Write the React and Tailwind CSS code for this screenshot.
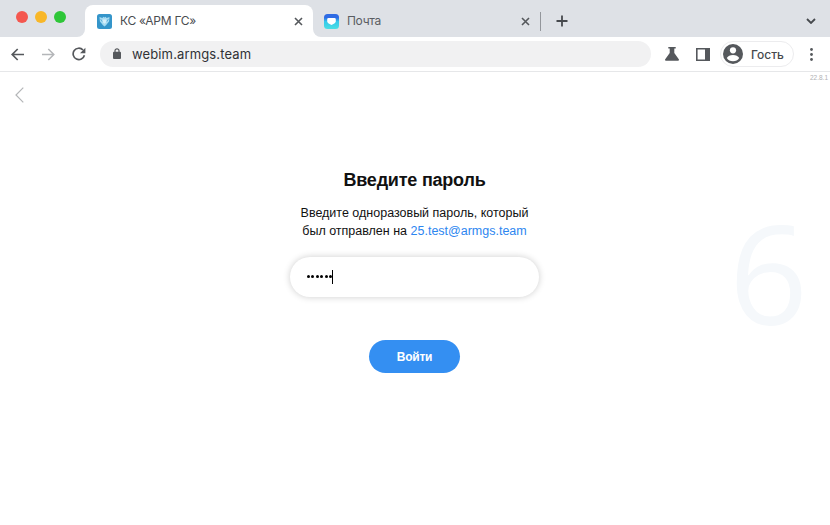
function TabClose() {
  return (
    <svg className="size-[9px] shrink-0" viewBox="0 0 9 9" stroke="#55585c" strokeWidth="1.6">
      <path d="M1 1l7 7M8 1L1 8" />
    </svg>
  );
}

function TabStrip() {
  return (
    <div className="flex h-[37px] items-end bg-[#dee1e6]">
      <div className="flex h-[37px] w-[77px] shrink-0 items-center gap-[7px] pb-[3px] pl-4">
        <span className="size-3 rounded-full bg-[#f4574f]" />
        <span className="size-3 rounded-full bg-[#f8b728]" />
        <span className="size-3 rounded-full bg-[#2ec638]" />
      </div>
      <span className="size-2 shrink-0 bg-white">
        <span className="block size-2 rounded-br-lg bg-[#dee1e6]" />
      </span>
      <div className="flex h-8 w-[228px] shrink-0 items-center rounded-t-lg bg-white pl-3 pr-[10px]">
        <svg className="size-[15px]" viewBox="0 0 15 15">
          <rect width="15" height="15" rx="2.500" fill="#3495ca" />
          <path d="M2.500 3l2.800 1 1.200-1.200 1 .8 1-.8L9.700 4l2.800-1-.4 4.500-1.700 2-1.400 1.700-1.500 1.300L6 11.200 4.600 9.500l-1.700-2z" fill="#a5daf1" />
          <path d="M5.700 5.500h3.600v2.700l-1.800 1.600-1.800-1.600z" fill="#d5effa" />
          <path d="M3.600 5l1.600 2.600M11.400 5L9.800 7.600" stroke="#3495ca" strokeWidth=".6" />
        </svg>
        <span className="ml-2 whitespace-nowrap text-[12px] tracking-[-0.27px] text-[#494c50]">КС «АРМ ГС»</span>
        <span className="ml-auto">
          <TabClose />
        </span>
      </div>
      <span className="size-2 shrink-0 bg-white">
        <span className="block size-2 rounded-bl-lg bg-[#dee1e6]" />
      </span>
      <div className="flex h-8 w-[219px] shrink-0 items-center pl-[3px] pr-[10px]">
        <svg className="size-[15px]" viewBox="0 0 15 15">
          <defs>
            <linearGradient id="mail" x1="0" y1="0" x2="0" y2="1">
              <stop offset="0.25" stopColor="#2f6be4" />
              <stop offset="0.5" stopColor="#35c8ea" />
              <stop offset="1" stopColor="#49dfe4" />
            </linearGradient>
          </defs>
          <rect width="15" height="15" rx="3.500" fill="url(#mail)" />
          <path d="M3.200 5.300Q3.200 4 4.600 4h5.800q1.400 0 1.400 1.300v2.200Q11.800 9 7.500 11 3.200 9 3.200 7.500z" fill="#fff" />
        </svg>
        <span className="ml-2 whitespace-nowrap text-[12px] tracking-[-0.3px] text-[#5a5d62]">Почта</span>
        <span className="ml-auto">
          <TabClose />
        </span>
      </div>
      <span className="mb-[6px] h-[19px] w-px shrink-0 bg-[#93969b]" />
      <svg className="mb-[10px] ml-[15px] size-3" viewBox="0 0 12 12" stroke="#46494d" strokeWidth="1.8">
        <path d="M6 .5v11M.5 6h11" />
      </svg>
      <svg className="mb-[13px] ml-auto mr-[14px] h-[6px] w-[10px]" viewBox="0 0 10 6" fill="none" stroke="#46494d" strokeWidth="1.8">
        <path d="M1 1l4 4 4-4" />
      </svg>
    </div>
  );
}

function Toolbar() {
  return (
    <div className="flex h-[35px] items-center border-b border-[#e6e7e9] bg-white pr-3">
      <svg className="ml-[11px] size-[13px] shrink-0" viewBox="0 0 13 13" fill="none" stroke="#55585c" strokeWidth="1.7">
        <path d="M13 6.500H1.300M6.700 1L1.200 6.500l5.500 5.500" />
      </svg>
      <svg className="ml-[18px] size-[13px] shrink-0" viewBox="0 0 13 13" fill="none" stroke="#b4b6b9" strokeWidth="1.500">
        <path d="M0 6.500h11.700M6.300 1l5.500 5.500-5.500 5.500" />
      </svg>
      <svg className="ml-[17px] size-[14px] shrink-0" viewBox="0 0 14 14">
        <path d="M12.400 8.300A5.700 5.700 0 1 1 11 3" fill="none" stroke="#55585c" strokeWidth="1.700" />
        <path d="M13.400.8v5.500H8z" fill="#55585c" />
      </svg>
      <div className="ml-[14px] flex h-[26px] w-[551px] shrink-0 items-center rounded-full bg-[#f1f1f2] pl-[13px]">
        <svg className="mb-px h-[11px] w-2" viewBox="0 0 8 11">
          <rect y="3.800" width="8" height="7.200" rx="1" fill="#55585c" />
          <path d="M2 4.500V2.800a2 2 0 0 1 4 0v1.700" fill="none" stroke="#55585c" strokeWidth="1.200" />
        </svg>
        <span className="ml-[11px] text-[13px] leading-5 tracking-[0.13px] text-[#303236]">webim.armgs.team</span>
      </div>
      <svg className="ml-[14px] h-[14px] w-[14px] shrink-0" viewBox="0 0 14 14" fill="#55585c">
        <path d="M3.300 0h7.400v1.500H9.300V6l4.500 6.200q.6 1.300-.8 1.500H1q-1.400-.2-.8-1.500L4.700 6V1.500H3.300z" />
      </svg>
      <svg className="ml-[17px] h-[13px] w-[14px] shrink-0" viewBox="0 0 14 13">
        <path d="M.8.8h12.400v11.400H.8z" fill="none" stroke="#55585c" strokeWidth="1.600" />
        <path d="M9 0h5v13H9z" fill="#55585c" />
      </svg>
      <div className="ml-[10px] flex h-[26px] w-[74px] shrink-0 items-center rounded-full border border-[#ececee] pl-[2px]">
        <svg className="size-5 shrink-0" viewBox="0 0 20 20">
          <circle cx="10" cy="10" r="10" fill="#55585c" />
          <circle cx="10" cy="6.300" r="3.100" fill="#fff" />
          <path d="M3.800 14q1.800-3 6.200-3t6.200 3q-2 3.300-6.200 3.300T3.800 14z" fill="#fff" />
        </svg>
        <span className="ml-[8px] pt-px text-[12px] font-medium text-[#46494d]">Гость</span>
      </div>
      <svg className="ml-auto mr-[5px] h-[13px] w-[3px] shrink-0" viewBox="0 0 3 13" fill="#55585c">
        <circle cx="1.500" cy="1.500" r="1.400" />
        <circle cx="1.500" cy="6.500" r="1.400" />
        <circle cx="1.500" cy="11.500" r="1.400" />
      </svg>
    </div>
  );
}

export default function App() {
  return (
    <div className="flex h-[525px] w-[830px] flex-col overflow-hidden bg-white font-['Inter','Roboto',sans-serif]">
      <TabStrip />
      <Toolbar />
      <main className="relative flex flex-1 flex-col font-['Liberation_Sans',Arial,sans-serif] text-[#111]">
        <div className="flex h-[97px] justify-between">
          <svg className="ml-[15px] mt-[15px] h-4 w-[9px]" viewBox="0 0 9 16" fill="none" stroke="#b4b6b8" strokeWidth="1.200">
            <path d="M8.300.7L1 8l7.300 7.300" />
          </svg>
          <span className="mr-[2px] mt-px text-[6.5px] leading-[9px] text-[#b0b1b4]">22.8.1</span>
        </div>
        <form className="flex flex-col items-center pr-px">
          <h1 className="h-[22px] text-[18px] font-bold leading-[22px] tracking-[-0.22px]">Введите пароль</h1>
          <p className="mt-[13px] text-center text-[12.5px] leading-[18px]">
            Введите одноразовый пароль, который
            <br />
            был отправлен на <a className="text-[#2d86f0]">25.test@armgs.team</a>
          </p>
          <div className="mt-[17px] flex h-10 w-[249px] items-center rounded-full bg-white pb-px pl-[17px] shadow-[0_0_7px_rgba(0,0,0,0.2)]">
            <span className="flex gap-[1.4px]">
              {[0, 1, 2, 3, 4, 5].map((i) => (
                <span key={i} className="size-[3px] rounded-full bg-black" />
              ))}
            </span>
            <span className="h-[14px] w-px bg-black" />
          </div>
          <button type="button" className="mt-[43px] h-[33px] w-[91px] rounded-full bg-[#348ff2] text-[12px] font-bold tracking-[-0.25px] text-white">
            Войти
          </button>
        </form>
        <span className="pointer-events-none absolute right-[22px] top-[105px] font-['Open_Sans'] text-[138px] font-medium leading-[188px] text-[#f5f8fb]">6</span>
      </main>
    </div>
  );
}
